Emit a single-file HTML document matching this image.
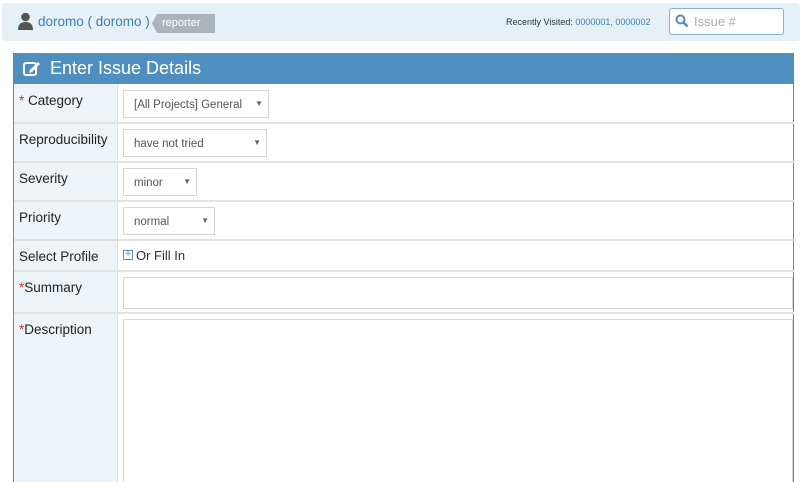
<!DOCTYPE html>
<html style="width:800px;height:482px;overflow:hidden"><head><style>
*{box-sizing:border-box;margin:0;padding:0}
body{width:800px;height:482px;overflow:hidden;background:#fff;font-family:"Liberation Sans",sans-serif;position:relative;color:#333}
.abs{position:absolute}
.top{left:2px;top:3px;width:798px;height:38px;background:#e6f0f7;border-radius:3px}
.panel{left:13px;top:53px;width:781px;height:440px;border:1px solid #4f8fc0;border-top:none}
.hdr{left:13px;top:53px;width:781px;height:31px;background:#4f8fc0;color:#fff;font-size:18px}
.lab{left:14px;top:84px;width:104px;height:400px;background:#eef3f7;border-right:1px solid #dcdcdc}
.row{left:14px;width:780px;height:2px;background:#e2e2e2}
.l{left:19px;font-size:13.5px;color:#222}
.sel{border:1px solid #d5d5d5;background:#fff;font-size:11.5px;color:#555;padding-left:10px;line-height:28px}
.sel:after{content:"▼";position:absolute;right:5px;font-size:8px;color:#666;line-height:26px}
.r{color:#c0392b}
</style></head><body>
<div class="abs top"></div>
<svg class="abs" style="left:17px;top:12px" width="17" height="18" viewBox="0 0 17 18"><circle cx="8.5" cy="5" r="4.3" fill="#555"/><path d="M1 18 Q1 10 8.5 10 Q16 10 16 18Z" fill="#555"/></svg>
<div class="abs" style="left:38px;top:14px;font-size:13.5px;color:#3d7eb5">doromo ( doromo )</div>
<div class="abs" style="left:152px;top:14px;width:63px;height:19px;background:#abb4bb;color:#fff;font-size:11px;line-height:19px;padding-left:10px;clip-path:polygon(5px 0,100% 0,100% 100%,5px 100%,0 50%)">reporter</div>
<div class="abs" style="left:506px;top:17px;font-size:9px;color:#333">Recently Visited: <span style="color:#3d7eb5">0000001, 0000002</span></div>
<div class="abs" style="left:669px;top:8px;width:115px;height:27px;background:#fff;border:1px solid #7fb3dd;border-radius:3px;font-size:13px;color:#aaa;line-height:25px;padding-left:24px">Issue #</div>
<svg class="abs" style="left:675px;top:14px" width="14" height="14" viewBox="0 0 14 14"><circle cx="5.5" cy="5.5" r="4" stroke="#4f8fc0" stroke-width="2" fill="none"/><path d="M8.5 8.5L12.5 12.5" stroke="#4f8fc0" stroke-width="2.4"/></svg>
<div class="abs panel"></div>
<div class="abs hdr"><svg style="position:absolute;left:10px;top:7px" width="18" height="17" viewBox="0 0 18 17"><rect x="1" y="3" width="12" height="12" rx="2" stroke="#fff" stroke-width="2" fill="none"/><path d="M7 10 L15 2 L17 4 L9 12 L6 13Z" fill="#fff"/></svg><span style="position:absolute;left:37px;top:5px">Enter Issue Details</span></div>
<div class="abs lab"></div>
<div class="abs row" style="top:122px"></div>
<div class="abs row" style="top:161px"></div>
<div class="abs row" style="top:200px"></div>
<div class="abs row" style="top:239px"></div>
<div class="abs row" style="top:270px"></div>
<div class="abs row" style="top:312px"></div>
<div class="abs l" style="top:93px"><span class="r">*</span> Category</div>
<div class="abs l" style="top:132px">Reproducibility</div>
<div class="abs l" style="top:171px">Severity</div>
<div class="abs l" style="top:210px">Priority</div>
<div class="abs l" style="top:249px">Select Profile</div>
<div class="abs l" style="top:280px"><span class="r">*</span>Summary</div>
<div class="abs l" style="top:322px"><span class="r">*</span>Description</div>
<div class="abs sel" style="left:123px;top:90px;width:146px;height:28px">[All Projects] General</div>
<div class="abs sel" style="left:123px;top:129px;width:144px;height:28px">have not tried</div>
<div class="abs sel" style="left:123px;top:168px;width:74px;height:28px">minor</div>
<div class="abs sel" style="left:123px;top:207px;width:92px;height:28px">normal</div>
<div class="abs" style="left:123px;top:250px;width:10px;height:10px;border:1px solid #4f8fc0;font-size:10px;line-height:8px;text-align:center;color:#4f8fc0">+</div>
<div class="abs" style="left:136px;top:248px;font-size:13px;color:#333">Or Fill In</div>
<div class="abs" style="left:123px;top:277px;width:670px;height:32px;border:1px solid #d5d5d5"></div>
<div class="abs" style="left:123px;top:319px;width:670px;height:170px;border:1px solid #d5d5d5"></div>
</body></html>
